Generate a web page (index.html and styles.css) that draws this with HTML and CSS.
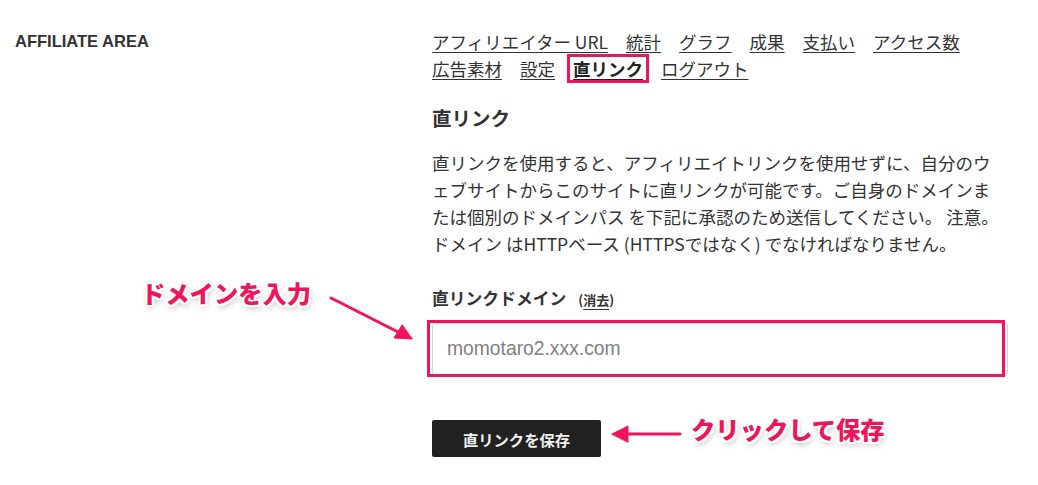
FILE: index.html
```html
<!DOCTYPE html>
<html lang="ja">
<head>
<meta charset="utf-8">
<title>Affiliate Area - 直リンク</title>
<link rel="stylesheet" href="styles.css">
</head>
<body>
<div class="page">
  <aside class="sidebar">
    <h3 class="area-title">AFFILIATE AREA</h3>
  </aside>
  <main class="main">
    <nav class="tabs">
      <a href="#">アフィリエイター URL</a>
      <a href="#">統計</a>
      <a href="#">グラフ</a>
      <a href="#">成果</a>
      <a href="#">支払い</a>
      <a href="#">アクセス数</a>
      <a href="#">広告素材</a>
      <a href="#">設定</a>
      <a href="#" class="active">直リンク</a>
      <a href="#">ログアウト</a>
    </nav>
    <h2 class="section-title">直リンク</h2>
    <p class="desc">直リンクを使用すると、アフィリエイトリンクを使用せずに、自分のウ<br>ェブサイトからこのサイトに直リンクが可能です。ご自身のドメインま<br>たは個別のドメインパス を下記に承認のため送信してください。 注意。<br>ドメイン はHTTPベース (HTTPSではなく) でなければなりません。</p>
    <form class="form">
      <label class="label">直リンクドメイン<span class="clear">(<u>消去</u>)</span></label>
      <div class="field">
        <input type="text" class="input" placeholder="momotaro2.xxx.com">
      </div>
      <button type="button" class="btn">直リンクを保存</button>
    </form>
  </main>

  <div class="note note-domain">ドメインを入力</div>
  <div class="note note-save">クリックして保存</div>
  <svg class="arrows" width="1038" height="485" viewBox="0 0 1038 485">
    <g stroke="#f0145a" stroke-width="3" stroke-linecap="round" fill="#f0145a">
      <line x1="331" y1="298" x2="400" y2="333"/>
      <polygon points="412,339 394,338 402,325" stroke-width="1" stroke-linejoin="round"/>
      <line x1="680" y1="434" x2="624" y2="434"/>
      <polygon points="612,434 628,426 628,442" stroke-width="1" stroke-linejoin="round"/>
    </g>
  </svg>
</div>
</body>
</html>
```
FILE: styles.css
```css
html, body {
  margin: 0;
  padding: 0;
  background: #fff;
}
body {
  font-family: "Noto Sans CJK JP", "Liberation Sans", sans-serif;
  color: #333;
}
.page {
  position: relative;
  width: 1038px;
  height: 485px;
  display: grid;
  grid-template-columns: 432px 576px;
  align-items: start;
}
.sidebar {
  padding: 31px 0 0 15px;
}
.area-title {
  margin: 0;
  font-family: "Liberation Sans", Arial, sans-serif;
  font-size: 16.5px;
  font-weight: bold;
  line-height: 20px;
  color: #333;
}
.main {
  padding-top: 28px;
}
.tabs {
  display: flex;
  flex-wrap: wrap;
  column-gap: 18px;
  font-size: 17.5px;
  line-height: 27px;
}
.tabs a {
  color: #333;
  text-decoration: underline;
  text-underline-offset: 3px;
  text-decoration-thickness: 1px;
}
.tabs a.active {
  font-weight: bold;
  color: #222;
  display: inline-block;
  padding: 0 5px;
  margin: 0 -5px 0 -5px;
  outline: 3px solid #f0145a;
  outline-offset: -2px;
}
.section-title {
  margin: 22px 0 0;
  font-size: 19.5px;
  line-height: 27px;
  font-weight: bold;
  color: #333;
}
.desc {
  margin: 18px 0 0;
  font-size: 17.5px;
  line-height: 27px;
  white-space: nowrap;
}
.form {
  display: flex;
  flex-direction: column;
  align-items: flex-start;
  margin-top: 29px;
}
.label {
  font-size: 16.8px;
  font-weight: bold;
  line-height: 24px;
  color: #333;
}
.clear {
  font-size: 13px;
  margin-left: 12px;
}
.clear u {
  text-underline-offset: 4px;
}
.field {
  position: relative;
  align-self: stretch;
  margin-top: 11px;
}
.field::after {
  content: "";
  position: absolute;
  left: -5px;
  right: 3px;
  top: -3px;
  bottom: -2px;
  border: 3px solid #f0145a;
  pointer-events: none;
}
.input {
  box-sizing: border-box;
  display: block;
  width: 100%;
  height: 52px;
  border: 1px solid #d4d4d4;
  border-radius: 3px;
  padding: 0 14px;
  font-family: "Liberation Sans", Arial, sans-serif;
  font-size: 19.3px;
  color: #333;
  background: #fff;
}
.input::placeholder {
  color: #808080;
}
.btn {
  margin-top: 45px;
  width: 169px;
  height: 37px;
  border: 0;
  border-radius: 2px;
  background: #212121;
  color: #f2f2f2;
  font-family: "Noto Sans CJK JP", sans-serif;
  font-size: 15.3px;
  font-weight: bold;
  cursor: pointer;
}
.note {
  position: absolute;
  font-family: "Noto Sans CJK JP", sans-serif;
  font-weight: 900;
  font-size: 24.3px;
  line-height: 30px;
  color: #f0145a;
  white-space: nowrap;
  text-shadow:
    2px 0 0 #fff, -2px 0 0 #fff, 0 2px 0 #fff, 0 -2px 0 #fff,
    2px 2px 0 #fff, -2px -2px 0 #fff, 2px -2px 0 #fff, -2px 2px 0 #fff,
    1px 3px 6px rgba(0,0,0,0.35);
}
.note-domain {
  left: 141px;
  top: 278px;
}
.note-save {
  left: 691px;
  top: 414px;
}
.arrows {
  position: absolute;
  left: 0;
  top: 0;
  pointer-events: none;
}
```
